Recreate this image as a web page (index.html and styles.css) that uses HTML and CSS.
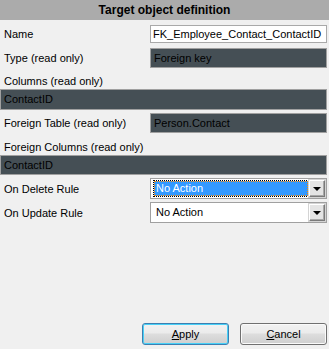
FILE: index.html
```html
<!DOCTYPE html>
<html>
<head>
<meta charset="utf-8">
<link rel="stylesheet" href="styles.css">
</head>
<body>
<div class="page">
  <div class="header">Target object definition</div>
  <div class="form">
    <div class="row r-name">
      <div class="lbl">Name</div>
      <div class="field input">FK_Employee_Contact_ContactID</div>
    </div>
    <div class="row r-type">
      <div class="lbl">Type (read only)</div>
      <div class="field dark">Foreign key</div>
    </div>
    <div class="label-line l-cols">Columns (read only)</div>
    <div class="dark wide w-cols">ContactID</div>
    <div class="row r-ftable">
      <div class="lbl">Foreign Table (read only)</div>
      <div class="field dark">Person.Contact</div>
    </div>
    <div class="label-line l-fcols">Foreign Columns (read only)</div>
    <div class="dark wide w-fcols">ContactID</div>
    <div class="row r-del">
      <div class="lbl">On Delete Rule</div>
      <div class="field select">
        <div class="sel-val focused"><span>No Action</span></div>
        <div class="drop"><span class="tri"></span></div>
      </div>
    </div>
    <div class="row r-upd">
      <div class="lbl">On Update Rule</div>
      <div class="field select">
        <div class="sel-val"><span>No Action</span></div>
        <div class="drop"><span class="tri"></span></div>
      </div>
    </div>
  </div>
  <div class="buttons">
    <div class="btn btn-apply"><u>A</u>pply</div>
    <div class="btn btn-cancel"><u>C</u>ancel</div>
  </div>
</div>
</body>
</html>
```
FILE: styles.css
```css
html, body {
  margin: 0;
  padding: 0;
  background: #f0f0f0;
}
body {
  font-family: "Liberation Sans", Arial, sans-serif;
  font-size: 11px;
  color: #000;
}
.page {
  width: 329px;
  height: 349px;
  display: flex;
  flex-direction: column;
}
.header {
  height: 20px;
  line-height: 20px;
  background: #ababab;
  text-align: center;
  font-weight: bold;
  font-size: 12px;
}
.form {
  padding-right: 2px;
  display: flex;
  flex-direction: column;
}
.row {
  display: flex;
  align-items: center;
}
.lbl {
  width: 150px;
  padding-left: 4px;
  box-sizing: border-box;
  flex: none;
}
.field {
  flex: 1;
  box-sizing: border-box;
}
.input {
  height: 18px;
  line-height: 16px;
  background: #fff;
  border: 1px solid #a9a9a9;
  padding-left: 2px;
  white-space: nowrap;
  overflow: hidden;
}
.dark {
  background: #454f55;
  border: 1px solid #a0a0a0;
  box-sizing: border-box;
  padding-left: 3px;
  height: 20px;
  line-height: 18px;
}
.wide {
  width: 100%;
}
.r-name { margin-top: 5px; }
.r-type { margin-top: 5px; }
.label-line {
  height: 14px;
  line-height: 14px;
  padding-left: 4px;
}
.l-cols { margin-top: 6px; }
.w-cols { margin-top: 1px; height: 21px; line-height: 19px; }
.r-ftable { margin-top: 3px; }
.l-fcols { margin-top: 7px; }
.w-fcols { margin-top: 1px; }
.r-del { margin-top: 3px; }
.r-upd { margin-top: 3px; }
.select {
  height: 21px;
  background: #fff;
  border: 1px solid #a0a0a0;
  display: flex;
  padding: 1px;
  box-sizing: border-box;
}
.sel-val {
  flex: 1;
  display: flex;
  align-items: center;
  padding-left: 2px;
  padding-right: 1px;
}
.sel-val span {
  display: block;
  line-height: 15px;
  padding-left: 2px;
}
.sel-val.focused span {
  flex: 1;
  background: #3399ff;
  color: #fff;
  outline: 1px dotted #000;
  border: 1px dotted #ff8c00;
  line-height: 13px;
  padding-left: 1px;
}
.drop {
  width: 16px;
  flex: none;
  background: #e4e4e4;
  border-top: 1px solid #ffffff;
  border-left: 1px solid #ffffff;
  border-right: 1px solid #7a7a7a;
  border-bottom: 1px solid #7a7a7a;
  box-shadow: inset -1px -1px 0 #a8a8a8, 0 0 0 1px #d4d4d4;
  box-sizing: border-box;
  display: flex;
  align-items: center;
  justify-content: center;
}
.tri {
  width: 0;
  height: 0;
  border-left: 4px solid transparent;
  border-right: 4px solid transparent;
  border-top: 4px solid #000;
}
.buttons {
  margin-top: auto;
  margin-bottom: 4px;
  display: flex;
  justify-content: flex-end;
  gap: 11px;
  padding-right: 2px;
}
.btn {
  width: 87px;
  height: 22px;
  box-sizing: border-box;
  border-radius: 3px;
  background: linear-gradient(#f2f2f2 0%, #ebebeb 45%, #dddddd 50%, #cfcfcf 100%);
  text-align: center;
  line-height: 20px;
  font-size: 11px;
}
.btn-apply {
  border: 1px solid #3c7fb1;
  box-shadow: inset 0 0 0 1px #48d0f7;
}
.btn-cancel {
  border: 1px solid #707070;
  box-shadow: inset 0 0 0 1px #fafafa;
}
.btn u {
  text-decoration: underline;
}
```
